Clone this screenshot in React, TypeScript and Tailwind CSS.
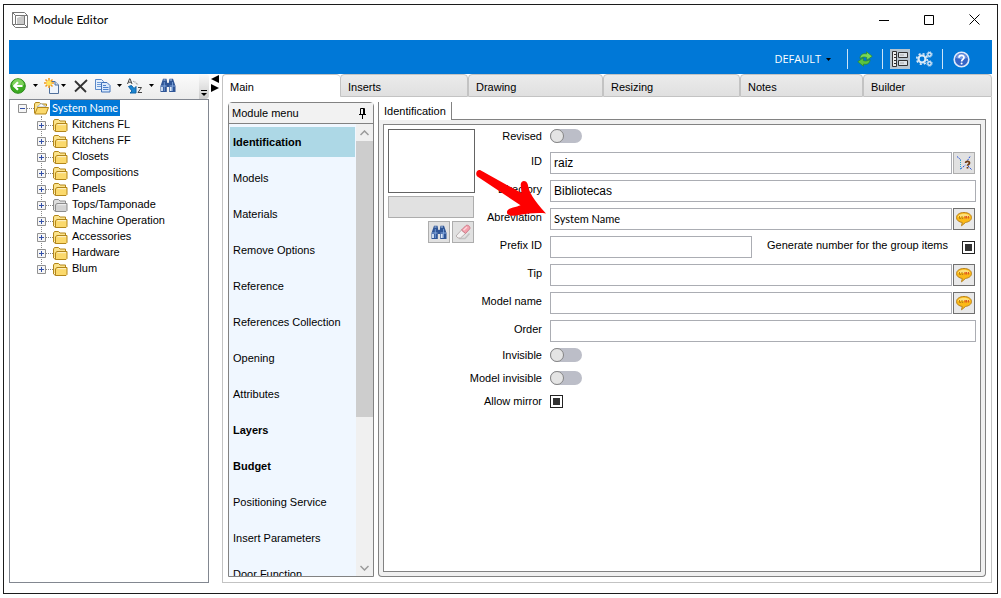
import React from 'react';

const MODULE_MENU = [
  { label: 'Identification', bold: true, active: true },
  { label: 'Models' },
  { label: 'Materials' },
  { label: 'Remove Options' },
  { label: 'Reference' },
  { label: 'References Collection' },
  { label: 'Opening' },
  { label: 'Attributes' },
  { label: 'Layers', bold: true },
  { label: 'Budget', bold: true },
  { label: 'Positioning Service' },
  { label: 'Insert Parameters' },
  { label: 'Door Function' },
];

const TREE = [
  'Kitchens FL',
  'Kitchens FF',
  'Closets',
  'Compositions',
  'Panels',
  'Tops/Tamponade',
  'Machine Operation',
  'Accessories',
  'Hardware',
  'Blum',
];

const TABS = [
  { label: 'Main', width: 'w-[118px]' },
  { label: 'Inserts', width: 'w-32' },
  { label: 'Drawing', width: 'w-[135px]' },
  { label: 'Resizing', width: 'w-[137px]' },
  { label: 'Notes', width: 'w-[123px]' },
  { label: 'Builder', width: 'flex-1' },
];

/* ---------- icons ---------- */

const Caret = () => (
  <svg width="5" height="3" viewBox="0 0 5 3" className="shrink-0">
    <path d="M0 0h5L2.5 3z" fill="#000" />
  </svg>
);

const AppIcon = () => (
  <svg width="16" height="16" viewBox="0 0 16 16" fill="none" stroke="#777">
    <path d="M.5.5h12l3 3v12h-12l-3-3z" fill="#fff" />
    <path d="M3.5 3.5h9v9h-9zM.5.5l3 3M.5 12.5h3M12.5 12.5l3 3M15.5 3.5h-3" />
    <path d="M5 12V6l5-2h2v8z" fill="#c9c9c9" stroke="none" />
  </svg>
);

const BackIcon = () => (
  <svg width="16" height="16" viewBox="0 0 16 16">
    <circle cx="8" cy="8" r="7.3" fill="#3cab22" stroke="#2c8a1c" />
    <path d="M2 7a6 6 0 0 1 12 0c-4 1.5-8 1.5-12 0z" fill="#7ed35c" />
    <path d="M12.5 8H4.5M8 4.2 4.2 8 8 11.8" fill="none" stroke="#fff" strokeWidth="2.2" />
  </svg>
);

const NewIcon = () => (
  <svg width="16" height="16" viewBox="0 0 16 16">
    <path d="M5.5 3.5H11L14.5 7v8.5h-9z" fill="#eef4fc" stroke="#50709c" />
    <path d="M11 3.5V7h3.5" fill="#cfdef2" stroke="#50709c" />
    <path d="M5 0v10M0 5h10M1.5 1.5l7 7M8.5 1.5l-7 7" stroke="#f29a1c" strokeWidth="1.5" />
    <circle cx="5" cy="5" r="2.6" fill="#ffe45c" />
  </svg>
);

const DeleteIcon = () => (
  <svg width="14" height="14" viewBox="0 0 14 14">
    <path d="M1 2l11 11M13 1 1 12.5" fill="none" stroke="#333" strokeWidth="1.8" />
  </svg>
);

const CopyIcon = () => (
  <svg width="16" height="16" viewBox="0 0 16 16">
    <path d="M.5 1.5h6l2 2v8h-8z" fill="#e4effc" stroke="#5b88c8" />
    <path d="M2 4.5h4M2 6.5h5M2 8.5h5" stroke="#6d9ad8" />
    <path d="M6.5 4.5H12l3 3V14H6.500z" fill="#d8e8fb" stroke="#3f70b8" />
    <path d="M8 7.5h3M8 9.5h5.500M8 11.5h5.500" stroke="#4a80cc" />
  </svg>
);

const SortIcon = () => (
  <svg width="16" height="16" viewBox="0 0 16 16" fill="none">
    <path d="M.5 6 2.5.8h.6L5 6M1.3 4.2h3" stroke="#444" />
    <path d="M11 9.5h3.500L11 14.5h4" stroke="#444" />
    <path d="M6 3l5 4M8 3.500l3 3" stroke="#888" strokeDasharray="1 1" />
    <path d="M1.500 8.500 4.500 7.500 7 10.500 9 8.500V15H3l2-2z" fill="#1b86d2" stroke="#0e62a6" />
  </svg>
);

const BinocularsIcon = () => (
  <svg width="16" height="15" viewBox="0 0 16 15">
    <path d="M3 .8h3.500l.8 4.200h1.400l.8-4.200H13L15.500 8v6H9.200V9H6.800v5H.5V8z" fill="#2f5596" />
    <path d="M3.500 2h2M10 2h2" stroke="#b8cdec" strokeWidth="1.2" />
    <path d="M2 9v4M10.800 9v4" stroke="#dce9fa" strokeWidth="1.8" />
    <path d="M4.300 4v9M12.500 4v9" stroke="#6f97d2" />
    <path d="M1 8h5.500M9.500 8H15" stroke="#89aadd" />
  </svg>
);

const RefreshIcon = () => (
  <svg width="16" height="16" viewBox="0 0 16 16" stroke="#2a8a25" strokeWidth=".7">
    <path d="M3 7.500C3 3.500 6 2 9.500 3V.8l5.700 4.500-5.400 3.900V6.500C7.500 5.500 5 6 3 7.500z" fill="#7bd957" />
    <path d="M13 8.500c0 4-3 5.500-6.500 4.500v2.200L.8 10.700l5.400-3.900v2.700c2.300 1 4.800.5 6.800-1z" fill="#5cc440" />
  </svg>
);

const LayoutIcon = () => (
  <svg width="16" height="16" viewBox="0 0 16 16" fill="none" stroke="#333">
    <path d="M.5.5h4v15h-4z" fill="#eee" />
    <path d="M2 3.5h2.500M2 6.5h2.500M2 9.5h2.500M2 12.5h2.500" />
    <path d="M6.500 1.500h9v5h-9zM6.500 9.500h9v5h-9z" fill="#dde3e8" />
    <path d="M8 4h4M8 12h4" stroke="#aaa" />
  </svg>
);

const GearsIcon = () => (
  <svg width="17" height="16" viewBox="0 0 17 16" fill="none" stroke="#dbe9f6">
    <circle cx="6" cy="8" r="3.5" strokeWidth="2.2" />
    <circle cx="6" cy="8" r="5.3" strokeWidth="1.6" strokeDasharray="2.08 2.08" />
    <circle cx="13.5" cy="3.5" r="1.7" strokeWidth="1.4" />
    <circle cx="13.5" cy="3.5" r="2.7" strokeDasharray="1.1 1.02" />
    <circle cx="13.5" cy="12.5" r="1.7" strokeWidth="1.4" />
    <circle cx="13.5" cy="12.5" r="2.7" strokeDasharray="1.1 1.02" />
  </svg>
);

const HelpIcon = () => (
  <svg width="17" height="17" viewBox="0 0 17 17">
    <circle cx="8.5" cy="8.5" r="7.3" fill="#3565c8" stroke="#dfe9fa" strokeWidth="1.6" />
    <path d="M3 7a5.600 5.600 0 0 1 11 0c-4 1.500-7 1.500-11 0z" fill="#6f97e4" />
    <path d="M6 6.800c0-3.200 5-3.200 5-.3 0 1.800-2.400 1.900-2.400 4" fill="none" stroke="#fff" strokeWidth="1.7" />
    <circle cx="8.6" cy="12.5" r="1" fill="#fff" />
  </svg>
);

const FolderIcon = ({ gray = false, open = false }: { gray?: boolean; open?: boolean }) => {
  const line = gray ? '#8c8c8c' : '#b3861a';
  const back = gray ? '#dedede' : '#fbe38c';
  const front = gray ? '#d3d3d3' : '#fbd96c';
  return (
    <svg width="15" height="13" viewBox="0 0 15 13" className="shrink-0">
      <path d="M.5 11V2l1-1.500h4L7 2h5.500v2" fill={back} stroke={line} />
      {open && <path d="M3 5l4-3.500L12.500 5z" fill="#fff" stroke="#9aa7bc" strokeWidth=".8" />}
      {open ? (
        <path d="M.8 12 3.500 5.500h11L12 12z" fill={front} stroke={line} />
      ) : (
        <path d="M2.500 12.500H13l1-1v-7H4l-1.500 1.200zM.5 11l2 1.500" fill={front} stroke={line} />
      )}
      {!open && <path d="M4.500 5.700H13" stroke="#fff" opacity=".7" />}
    </svg>
  );
};

const Expander = ({ open = false }: { open?: boolean }) => (
  <svg width="9" height="9" viewBox="0 0 9 9" className="relative shrink-0 bg-white">
    <path d="M.5.5h8v8h-8z" fill="#f6f6f6" stroke="#919191" />
    <path d={open ? 'M2 4.5h5' : 'M2 4.5h5M4.5 2v5'} stroke="#3350a8" />
  </svg>
);

const PinIcon = () => (
  <svg width="7" height="11" viewBox="0 0 7 11" fill="none" stroke="#000">
    <path d="M1.500 6V.5h4V6M0 6.500h7M3.500 7v4M4.500 1v5" />
  </svg>
);

const EraserIcon = () => (
  <svg width="16" height="16" viewBox="0 0 16 16">
    <path d="M4 14.500h6l4.500-5" stroke="#c2c2c2" strokeWidth="1.5" fill="none" />
    <path d="M1 12 6.500 6l4 3.500L5.500 14H3z" fill="#f4f2f2" stroke="#b9b1b1" />
    <path d="M6.500 6 11 1.500c2-1 4.500 1 3.800 3.300l-4.300 4.700z" fill="#f3a0ac" stroke="#cf7d8b" />
    <path d="M8.500 6.200 12 3" stroke="#fcd5da" strokeWidth="1.5" />
  </svg>
);

const QueryIcon = () => (
  <svg width="17" height="16" viewBox="0 0 17 16" fill="none">
    <path d="M1 1.500l3.500 3M14 1.500l-2.500 4M4.500 14l5-4M12 11l3.500 3.500" stroke="#2450d8" strokeDasharray="2 1" />
    <path d="M4.500 5v9" stroke="#25a7d0" strokeDasharray="1 1" />
    <path d="M9.500 8c.3-2.300 4-2.300 4 0 0 1.500-2 1.500-2 2.800M11.500 12v1.500" stroke="#6e3b12" strokeWidth="1.7" />
  </svg>
);

const BubbleIcon = () => (
  <svg width="16" height="16" viewBox="0 0 16 16">
    <path d="M8 1.500c4.200 0 7.500 2 7.500 5S12.500 11 9.500 11.500L5.500 14.800l.8-3.300C3 11 .5 9.300.5 6.500c0-3 3.300-5 7.500-5z" fill="#fbb917" stroke="#b8831f" />
    <path d="M2 6c.3-4.500 11.700-4.500 12 0z" fill="#fde07a" />
    <path d="M3.500 5v2.500h1.500M6 5v2.500h1.200" fill="none" stroke="#b98314" />
    <path d="M9 5v2.500M10.500 5v2.500M12.500 5v2.500" stroke="#dd5a20" strokeWidth="1.2" />
  </svg>
);

/* ---------- form parts ---------- */

type FieldRowProps = { id: string; label: string; labelClass?: string; children: React.ReactNode };

const FieldRow = ({ id, label, labelClass = 'pb-1', children }: FieldRowProps) => (
  <div className="flex h-[22px] items-center gap-2">
    <div className={`flex w-[67px] shrink-0 justify-end ${labelClass}`}>
      <label htmlFor={id} className="whitespace-nowrap">{label}</label>
    </div>
    {children}
  </div>
);

const TextBox = ({ id, value = '', className = 'flex-1 text-xs' }: { id: string; value?: string; className?: string }) => (
  <input
    id={id}
    type="text"
    defaultValue={value}
    className={`h-[22px] min-w-0 border border-[#abadb3] bg-white px-[3px] outline-none ${className}`}
  />
);

const Toggle = ({ id }: { id: string }) => (
  <input
    id={id}
    type="checkbox"
    role="switch"
    className="h-[14px] w-8 appearance-none rounded-full bg-[#bcbec8] before:block before:size-[14px] before:rounded-full before:border before:border-[#858585] before:bg-[#e4e4e4]"
  />
);

const CheckBox = ({ id }: { id: string }) => (
  <input id={id} type="checkbox" defaultChecked className="size-[13px] shrink-0 appearance-none border border-[#222] bg-[#333] bg-clip-content p-[2px]" />
);

const BubbleButton = ({ label }: { label: string }) => (
  <button type="button" aria-label={label} className="mr-px ml-px flex size-[22px] items-center justify-center border border-[#707070] bg-[#e9e9e9]">
    <BubbleIcon />
  </button>
);

/* ---------- panels ---------- */

const TitleBar = () => (
  <header className="flex h-[35px] shrink-0 items-center pr-[17px] pb-[5px] pl-2">
    <AppIcon />
    <h1 className="ml-[5px] flex-1 font-['Lato',sans-serif] text-xs">Module Editor</h1>
    <div className="flex items-center gap-[35px] pb-[2px]">
      <button aria-label="Minimize">
        <svg width="10" height="11" viewBox="0 0 10 11"><path d="M0 6.500h10" stroke="#000" /></svg>
      </button>
      <button aria-label="Maximize">
        <svg width="10" height="11" viewBox="0 0 10 11"><path d="M.5 1.500h9v9h-9z" fill="none" stroke="#000" /></svg>
      </button>
      <button aria-label="Close">
        <svg width="11" height="11" viewBox="0 0 11 11"><path d="M.5.5l10 10M10.500.5l-10 10" stroke="#000" /></svg>
      </button>
    </div>
  </header>
);

const Ribbon = () => (
  <div className="flex h-[34px] shrink-0 items-center justify-end bg-[#0078d7] pt-1 pr-[22px]">
    <button className="mr-4 flex items-center gap-[5px] font-['Open_Sans',sans-serif] text-[11px] text-white">
      DEFAULT <Caret />
    </button>
    <span className="h-5 w-px bg-white/80" />
    <button aria-label="Refresh" className="mx-[9px]"><RefreshIcon /></button>
    <span className="h-5 w-px bg-white/80" />
    <button aria-label="Layout" className="mr-1.5 ml-[7px] flex size-5 items-center justify-center bg-[#b9c6d0]"><LayoutIcon /></button>
    <button aria-label="Settings"><GearsIcon /></button>
    <span className="mr-[10px] ml-[9px] h-5 w-px bg-white/80" />
    <button aria-label="Help"><HelpIcon /></button>
  </div>
);

const TreePanel = () => (
  <aside className="flex w-[200px] shrink-0 flex-col">
    <div className="flex h-[25px] shrink-0 items-center rounded-r bg-linear-to-b from-[#fbfbfb] to-[#ececec] pl-px">
      <div className="flex items-center pb-[2px]">
        <button aria-label="Back" className="flex items-center gap-[7px]"><BackIcon /><Caret /></button>
        <button aria-label="New" className="ml-1.5 flex items-center gap-px"><NewIcon /><Caret /></button>
        <button aria-label="Delete" className="ml-2"><DeleteIcon /></button>
        <button aria-label="Copy" className="ml-[7px] flex items-center gap-1.5"><CopyIcon /><Caret /></button>
        <button aria-label="Sort" className="ml-[5px] flex items-center gap-1.5"><SortIcon /><Caret /></button>
        <button aria-label="Find" className="ml-1.5"><BinocularsIcon /></button>
      </div>
      <button aria-label="More tools" className="ml-auto flex h-full w-[10px] items-end justify-center rounded-r bg-linear-to-b from-[#fafafa] to-[#cccccc] pb-[3px]">
        <svg width="6" height="6" viewBox="0 0 6 6"><path d="M0 .5h6" stroke="#000" /><path d="M0 3h6L3 6z" fill="#000" /></svg>
      </button>
    </div>
    <div className="flex-1 border border-[#828790] bg-white">
      <div className="flex h-4 items-center pl-2">
        <Expander open />
        <span className="w-[7px] border-t border-dotted border-[#888]" />
        <FolderIcon open />
        <span className="ml-px bg-[#0078d7] px-[2px] font-['Lato',sans-serif] text-[11px] leading-4 text-white">System Name</span>
      </div>
      <ul className="relative before:absolute before:top-0 before:bottom-2 before:left-[31px] before:border-l before:border-dotted before:border-[#888]">
        {TREE.map(name => (
          <li key={name} className="relative flex h-4 items-center pl-[27px]">
            <div className="flex items-center pt-[3px]">
              <Expander />
              <span className="w-[7px] border-t border-dotted border-[#888]" />
              <FolderIcon gray={name === 'Tops/Tamponade'} />
            </div>
            <span className="ml-1">{name}</span>
          </li>
        ))}
      </ul>
    </div>
  </aside>
);

const ModuleMenu = () => (
  <nav className="flex w-[146px] shrink-0 flex-col rounded-t-sm border border-[#828282] bg-[#f0f7ff]">
    <div className="flex h-[21px] shrink-0 items-center justify-between border-b border-[#828282] bg-[#f2f2f2] pr-[7px] pl-[3px]">
      <span>Module menu</span>
      <button aria-label="Pin"><PinIcon /></button>
    </div>
    <div className="flex min-h-0 flex-1">
      <ul className="flex-1 space-y-1.5 overflow-hidden pt-[3px] pr-px pl-px">
        {MODULE_MENU.map(item => (
          <li key={item.label}>
            <a
              href="#"
              className={`flex h-[30px] items-center pl-[3px] whitespace-nowrap ${item.active ? 'bg-[#add8e6]' : ''} ${item.bold ? 'font-bold' : ''}`}
            >
              {item.label}
            </a>
          </li>
        ))}
      </ul>
      <div className="flex w-[17px] shrink-0 flex-col bg-[#f0f0f0]">
        <button aria-label="Scroll up" className="flex h-[17px] items-center justify-center">
          <svg width="9" height="6" viewBox="0 0 9 6"><path d="M.5 5l4-4 4 4" fill="none" stroke="#9a9a9a" strokeWidth="1.5" /></svg>
        </button>
        <div className="flex-1">
          <div className="h-[66%] bg-[#cdcdcd]" />
        </div>
        <button aria-label="Scroll down" className="flex h-[17px] items-center justify-center">
          <svg width="9" height="6" viewBox="0 0 9 6"><path d="M.5 1l4 4 4-4" fill="none" stroke="#9a9a9a" strokeWidth="1.5" /></svg>
        </button>
      </div>
    </div>
  </nav>
);

const IdentificationForm = () => (
  <form className="relative flex flex-1 border border-[#828282] bg-white pr-1 pl-1">
    <div className="mr-[-8px] w-[87px] shrink-0 pt-1">
      <div className="h-16 border border-[#646464] bg-white" />
      <div className="mt-[3px] mr-px h-[22px] border border-[#adadad] bg-[#e1e1e1]" />
      <div className="mt-[3px] mr-px flex justify-end gap-[2px]">
        <button type="button" aria-label="Find image" className="flex size-[22px] items-center justify-center border border-[#adadad] bg-[#e1e1e1]"><BinocularsIcon /></button>
        <button type="button" aria-label="Clear image" className="flex size-[22px] items-center justify-center border border-[#adadad] bg-[#e1e1e1]"><EraserIcon /></button>
      </div>
    </div>

    <div className="ml-2 flex min-w-0 flex-1 flex-col gap-1.5">
      <div className="-mb-px"><FieldRow id="revised" label="Revised" labelClass="pb-0"><Toggle id="revised" /></FieldRow></div>
      <FieldRow id="id" label="ID">
        <div className="flex flex-1">
          <TextBox id="id" value="raiz" />
          <button type="button" aria-label="Pick ID" className="mr-px ml-px flex size-[22px] items-center justify-center border border-[#adadad] bg-[#e1e1e1]"><QueryIcon /></button>
        </div>
      </FieldRow>
      <FieldRow id="directory" label="Directory"><TextBox id="directory" value="Bibliotecas" /></FieldRow>
      <FieldRow id="abreviation" label="Abreviation">
        <div className="flex flex-1">
          <TextBox id="abreviation" value="System Name" className="flex-1 pb-[2px] font-['Lato',sans-serif] text-[11px]" />
          <BubbleButton label="Translate abreviation" />
        </div>
      </FieldRow>
      <FieldRow id="prefix" label="Prefix ID">
        <div className="flex flex-1 items-center pr-px">
          <TextBox id="prefix" className="w-[202px] text-xs" />
          <label htmlFor="generate" className="mr-[14px] ml-auto pb-1 whitespace-nowrap">Generate number for the group items</label>
          <CheckBox id="generate" />
        </div>
      </FieldRow>
      <FieldRow id="tip" label="Tip">
        <div className="flex flex-1">
          <TextBox id="tip" />
          <BubbleButton label="Translate tip" />
        </div>
      </FieldRow>
      <FieldRow id="model-name" label="Model name">
        <div className="flex flex-1">
          <TextBox id="model-name" />
          <BubbleButton label="Translate model name" />
        </div>
      </FieldRow>
      <FieldRow id="order" label="Order"><TextBox id="order" /></FieldRow>
      <div className="-mt-1 flex flex-col gap-px">
        <FieldRow id="invisible" label="Invisible" labelClass="pb-0"><Toggle id="invisible" /></FieldRow>
        <FieldRow id="model-invisible" label="Model invisible" labelClass="pb-0"><Toggle id="model-invisible" /></FieldRow>
        <FieldRow id="allow-mirror" label="Allow mirror" labelClass="pb-0"><CheckBox id="allow-mirror" /></FieldRow>
      </div>
    </div>

    {/* pointer to the abbreviation field */}
    <svg width="72" height="50" viewBox="0 0 72 50" className="pointer-events-none absolute top-[43px] left-[91px]">
      <path
        d="M5.500 2.300 46.500 25 45.700 17C45.500 12 51.500 11.500 52.800 16.500C54 24 58 31 71 45.500C64 44.500 52 45.500 44 47C39 48 33 48.500 32 45C31.500 41.500 35 40.300 38 39.500C41 39 43.500 38 45.500 37.300L2.300 8.500C-.5 5.500 2.500 1 5.500 2.300z"
        fill="#fe0000"
      />
    </svg>
  </form>
);

const App: React.FC = () => {
  return (
    <div className="flex h-screen flex-col bg-white px-[3px] py-1 font-['Liberation_Sans',Arial,sans-serif] text-[11px] leading-4 text-black">
      <div className="flex min-h-0 flex-1 flex-col border border-[#1c1c1c]">
        <TitleBar />
        <main className="flex min-h-0 flex-1 flex-col px-[5px] pb-[10px]">
          <Ribbon />
          <div className="flex min-h-0 flex-1">
            <TreePanel />

            <div className="w-[13px] shrink-0 pt-px pl-[2px]">
              <svg width="8" height="18" viewBox="0 0 8 18"><path d="M8 0v8L0 4zM0 9l8 4-8 4z" fill="#000" /></svg>
            </div>

            <section className="flex min-w-0 flex-1 flex-col">
              <div role="tablist" className="flex h-[23px] shrink-0">
                {TABS.map((tab, i) => (
                  <button
                    key={tab.label}
                    role="tab"
                    aria-selected={i === 0}
                    className={`rounded-t-sm border-t border-l border-[#c3c3c3] pt-[2px] pl-[7px] text-left ${tab.width} ${i === 0 ? 'bg-white' : 'border-r border-b bg-linear-to-b from-[#ebebeb] to-[#e0e0e0]'}`}
                  >
                    {tab.label}
                  </button>
                ))}
              </div>

              <div className="flex min-h-0 flex-1 gap-1 border border-t-0 border-[#c3c3c3] p-[5px]">
                <ModuleMenu />
                <div className="flex min-w-0 flex-1 flex-col">
                  <div className="flex h-[18px] shrink-0">
                    <button role="tab" aria-selected className="border-r border-l border-[#828282] px-[5px]">Identification</button>
                    <div className="flex-1 border-b border-[#828282]" />
                  </div>
                  <div className="flex min-h-0 flex-1 rounded-b-sm border border-t-0 border-[#828282] bg-[#f0f0f0] p-1">
                    <IdentificationForm />
                  </div>
                </div>
              </div>
            </section>
          </div>
        </main>
      </div>
    </div>
  );
};

export default App;
